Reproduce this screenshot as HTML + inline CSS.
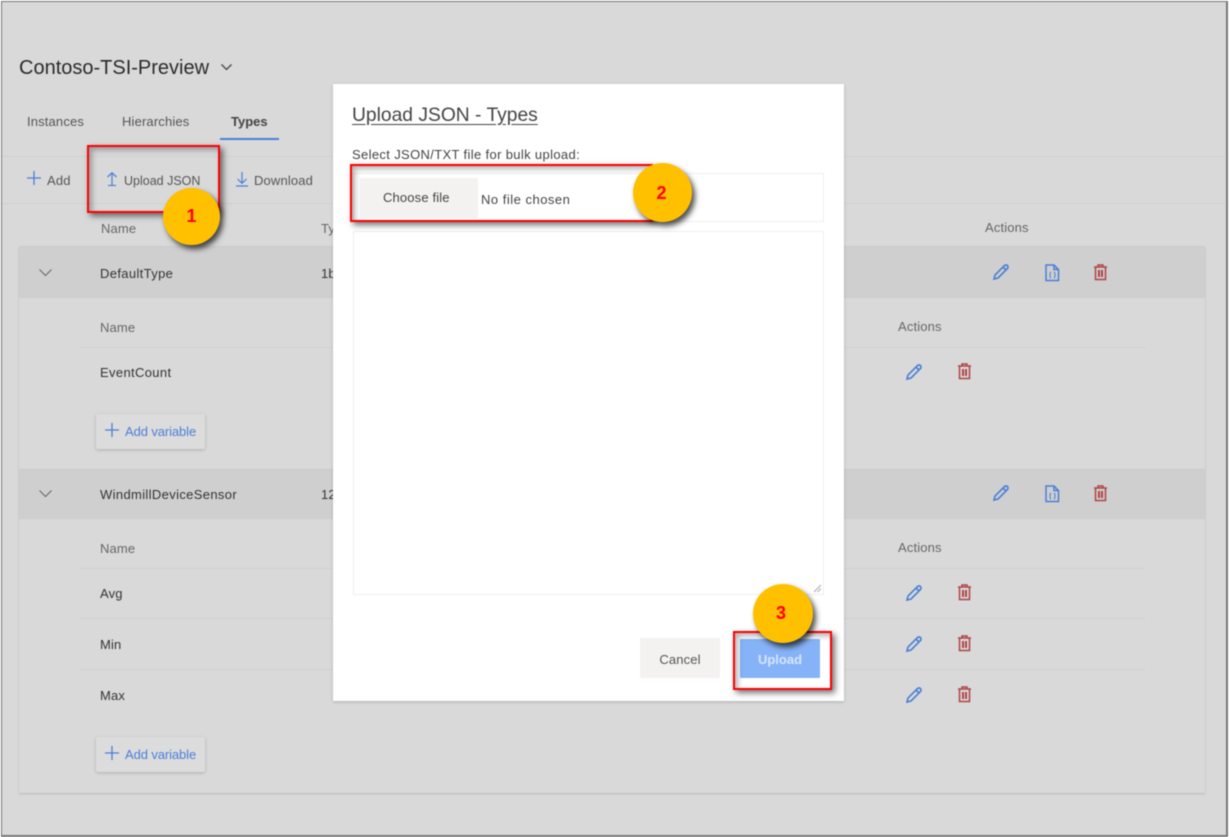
<!DOCTYPE html>
<html lang="en">
<head>
<meta charset="utf-8">
<title>Upload JSON - Types</title>
<style>
html,body{margin:0;padding:0;width:1229px;height:837px;overflow:hidden;background:#fff}
body{position:relative;font-family:"Liberation Sans",sans-serif}
#f{position:absolute;left:0;top:0;width:1229px;height:837px;filter:blur(.4px)}
#f div,#f svg,#f span{position:absolute}
.t{white-space:nowrap;font-size:13px;line-height:18px;color:#555;letter-spacing:.15px;margin-top:1px}
.b{color:#333}
.page{left:1px;top:1px;width:1224px;height:833px;background:#d9d9d9;border:1px solid #777;border-right-width:2px;border-bottom-width:2px}
.line{height:1px;background:#d0d0d0}
.row{left:19px;width:1186px;background:#cfcfcf;box-shadow:0 1px 2px rgba(0,0,0,.14),0 -1px 1px rgba(0,0,0,.06)}
.panel{left:19px;width:1186px;background:#d9d9d9;box-shadow:0 1px 2px rgba(0,0,0,.16)}
.addv{left:96px;width:109px;height:35px;background:#dcdcdc;box-shadow:0 1px 3px rgba(0,0,0,.2);border-radius:2px}
.blue{color:#4a7fd6;letter-spacing:-.1px}
.modal{left:333px;top:84px;width:511px;height:617px;background:#fff;box-shadow:0 1px 3px rgba(0,0,0,.2)}
.red{border:2px solid #f00;box-sizing:border-box;box-shadow:3px 3px 6px rgba(0,0,0,.55),inset 3px 3px 6px rgba(0,0,0,.3)}
.c{border-radius:50%;background:#ffc000;box-shadow:3px 4px 6px rgba(0,0,0,.7);color:#f00;font-weight:bold;font-size:18px;text-align:center}
</style>
</head>
<body>
<div id="f">
<div class="page"></div>

<div class="t" style="left:19px;top:54px;font-size:20px;line-height:26px;color:#2b2b2b;letter-spacing:0">Contoso-TSI-Preview</div>
<svg style="left:220px;top:62px" width="13" height="10" viewBox="0 0 13 10"><path d="M1.5 2.500L6.500 7.500L11.500 2.500" fill="none" stroke="#444" stroke-width="1.300"/></svg>

<div class="t" style="left:27px;top:112px">Instances</div>
<div class="t" style="left:122px;top:112px">Hierarchies</div>
<div class="t b" style="left:231px;top:112px;font-weight:bold;color:#444;letter-spacing:0">Types</div>
<div style="left:220px;top:138px;width:59px;height:2px;background:#4a7fd6"></div>

<div class="line" style="left:2px;top:156px;width:1223px"></div>
<div class="line" style="left:2px;top:203px;width:1223px"></div>

<svg style="left:27px;top:171px" width="14" height="14" viewBox="0 0 14 14"><path d="M7 0V14M0 7H14" stroke="#4a7fd6" stroke-width="1.300"/></svg>
<div class="t" style="left:47px;top:171px">Add</div>
<svg style="left:106px;top:172px" width="12" height="14" viewBox="0 0 12 14"><path d="M6 1V13M1.500 5L6 .8L10.500 5M2 13.500H10" fill="none" stroke="#4a7fd6" stroke-width="1.200"/></svg>
<div class="t" style="left:124px;top:171px;font-size:12.5px;letter-spacing:0">Upload JSON</div>
<svg style="left:236px;top:171px" width="12" height="16" viewBox="0 0 12 16"><path d="M6 1V12M1.500 8L6 12.300L10.500 8M0 15H12" fill="none" stroke="#4a7fd6" stroke-width="1.200"/></svg>
<div class="t" style="left:254px;top:171px">Download</div>

<div class="t" style="left:101px;top:219px;color:#666">Name</div>
<div class="t" style="left:321px;top:219px;color:#666">Type</div>
<div class="t" style="left:985px;top:218px;color:#666">Actions</div>

<!-- group 1 -->
<div class="row" style="top:247px;height:51px"></div>
<div class="panel" style="top:298px;height:172px"></div>
<svg style="left:39px;top:268px" width="13" height="9" viewBox="0 0 13 9"><path d="M.5 1.500L6.500 7.500L12.500 1.500" fill="none" stroke="#666" stroke-width="1"/></svg>
<div class="t b" style="left:100px;top:264px;letter-spacing:.35px">DefaultType</div>
<div class="t b" style="left:321px;top:264px">1b</div>
<svg style="left:992px;top:263px" width="18" height="18" viewBox="0 0 18 18"><path d="M2 16L3 12L12.500 2.500Q14 1.500 15.500 2.500Q16.500 4 15.500 5.500L6 15ZM11 4L14 7" fill="none" stroke="#4a7fd6" stroke-width="1.600"/></svg>
<svg style="left:1044px;top:264px" width="16" height="18" viewBox="0 0 16 18"><path d="M2 1H10L14.500 5.500V16.500H2ZM10 1V5.500H14.500" fill="none" stroke="#4a7fd6" stroke-width="1.500"/><path d="M7 8C5.800 8 6.500 11 5.500 11C6.500 11 5.800 14 7 14M10 8C11.200 8 10.500 11 11.500 11C10.500 11 11.200 14 10 14" fill="none" stroke="#4a7fd6" stroke-width="1.100"/></svg>
<svg style="left:1093px;top:264px" width="15" height="17" viewBox="0 0 15 17"><path d="M1 3H14M5 3V1H10V3M2.500 3V15.500H12.500V3" fill="none" stroke="#b04545" stroke-width="1.500"/><path d="M6 6V13M9 6V13" stroke="#b04545" stroke-width="2"/></svg>

<div class="t" style="left:100px;top:318px;color:#666">Name</div>
<div class="t" style="left:898px;top:317px;color:#666">Actions</div>
<div class="line" style="left:80px;top:347px;width:1065px"></div>
<div class="t b" style="left:100px;top:363px;letter-spacing:.35px">EventCount</div>
<svg style="left:905px;top:363px" width="18" height="18" viewBox="0 0 18 18"><path d="M2 16L3 12L12.500 2.500Q14 1.500 15.500 2.500Q16.500 4 15.500 5.500L6 15ZM11 4L14 7" fill="none" stroke="#4a7fd6" stroke-width="1.600"/></svg>
<svg style="left:957px;top:363px" width="15" height="17" viewBox="0 0 15 17"><path d="M1 3H14M5 3V1H10V3M2.500 3V15.500H12.500V3" fill="none" stroke="#b04545" stroke-width="1.500"/><path d="M6 6V13M9 6V13" stroke="#b04545" stroke-width="2"/></svg>
<div class="addv" style="top:414px"></div>
<svg style="left:105px;top:423px" width="14" height="14" viewBox="0 0 14 14"><path d="M7 0V14M0 7H14" stroke="#4a7fd6" stroke-width="1.300"/></svg>
<div class="t blue" style="left:125px;top:422px">Add variable</div>

<!-- group 2 -->
<div class="row" style="top:470px;height:49px"></div>
<div class="panel" style="top:519px;height:274px"></div>
<svg style="left:39px;top:489px" width="13" height="9" viewBox="0 0 13 9"><path d="M.5 1.500L6.500 7.500L12.500 1.500" fill="none" stroke="#666" stroke-width="1"/></svg>
<div class="t b" style="left:100px;top:485px;letter-spacing:.35px">WindmillDeviceSensor</div>
<div class="t b" style="left:321px;top:485px">12</div>
<svg style="left:992px;top:484px" width="18" height="18" viewBox="0 0 18 18"><path d="M2 16L3 12L12.500 2.500Q14 1.500 15.500 2.500Q16.500 4 15.500 5.500L6 15ZM11 4L14 7" fill="none" stroke="#4a7fd6" stroke-width="1.600"/></svg>
<svg style="left:1044px;top:485px" width="16" height="18" viewBox="0 0 16 18"><path d="M2 1H10L14.500 5.500V16.500H2ZM10 1V5.500H14.500" fill="none" stroke="#4a7fd6" stroke-width="1.500"/><path d="M7 8C5.800 8 6.500 11 5.500 11C6.500 11 5.800 14 7 14M10 8C11.200 8 10.500 11 11.500 11C10.500 11 11.200 14 10 14" fill="none" stroke="#4a7fd6" stroke-width="1.100"/></svg>
<svg style="left:1093px;top:485px" width="15" height="17" viewBox="0 0 15 17"><path d="M1 3H14M5 3V1H10V3M2.500 3V15.500H12.500V3" fill="none" stroke="#b04545" stroke-width="1.500"/><path d="M6 6V13M9 6V13" stroke="#b04545" stroke-width="2"/></svg>

<div class="t" style="left:100px;top:539px;color:#666">Name</div>
<div class="t" style="left:898px;top:538px;color:#666">Actions</div>
<div class="line" style="left:80px;top:568px;width:1065px"></div>
<div class="t b" style="left:100px;top:584px">Avg</div>
<svg style="left:905px;top:584px" width="18" height="18" viewBox="0 0 18 18"><path d="M2 16L3 12L12.500 2.500Q14 1.500 15.500 2.500Q16.500 4 15.500 5.500L6 15ZM11 4L14 7" fill="none" stroke="#4a7fd6" stroke-width="1.600"/></svg>
<svg style="left:957px;top:584px" width="15" height="17" viewBox="0 0 15 17"><path d="M1 3H14M5 3V1H10V3M2.500 3V15.500H12.500V3" fill="none" stroke="#b04545" stroke-width="1.500"/><path d="M6 6V13M9 6V13" stroke="#b04545" stroke-width="2"/></svg>
<div class="line" style="left:80px;top:618px;width:1065px"></div>
<div class="t b" style="left:100px;top:635px">Min</div>
<svg style="left:905px;top:635px" width="18" height="18" viewBox="0 0 18 18"><path d="M2 16L3 12L12.500 2.500Q14 1.500 15.500 2.500Q16.500 4 15.500 5.500L6 15ZM11 4L14 7" fill="none" stroke="#4a7fd6" stroke-width="1.600"/></svg>
<svg style="left:957px;top:635px" width="15" height="17" viewBox="0 0 15 17"><path d="M1 3H14M5 3V1H10V3M2.500 3V15.500H12.500V3" fill="none" stroke="#b04545" stroke-width="1.500"/><path d="M6 6V13M9 6V13" stroke="#b04545" stroke-width="2"/></svg>
<div class="line" style="left:80px;top:669px;width:1065px"></div>
<div class="t b" style="left:100px;top:686px">Max</div>
<svg style="left:905px;top:686px" width="18" height="18" viewBox="0 0 18 18"><path d="M2 16L3 12L12.500 2.500Q14 1.500 15.500 2.500Q16.500 4 15.500 5.500L6 15ZM11 4L14 7" fill="none" stroke="#4a7fd6" stroke-width="1.600"/></svg>
<svg style="left:957px;top:686px" width="15" height="17" viewBox="0 0 15 17"><path d="M1 3H14M5 3V1H10V3M2.500 3V15.500H12.500V3" fill="none" stroke="#b04545" stroke-width="1.500"/><path d="M6 6V13M9 6V13" stroke="#b04545" stroke-width="2"/></svg>
<div class="addv" style="top:737px"></div>
<svg style="left:105px;top:746px" width="14" height="14" viewBox="0 0 14 14"><path d="M7 0V14M0 7H14" stroke="#4a7fd6" stroke-width="1.300"/></svg>
<div class="t blue" style="left:125px;top:745px">Add variable</div>

<!-- modal -->
<div class="modal"></div>
<div class="t" style="left:352px;top:102px;font-size:19.25px;line-height:26px;color:#444;text-decoration:underline;text-underline-offset:3px;letter-spacing:0">Upload JSON - Types</div>
<div class="t" style="left:352px;top:145px;color:#444;letter-spacing:.35px">Select JSON/TXT file for bulk upload:</div>
<div style="left:353px;top:173px;width:469px;height:47px;border:1px solid #eee"></div>
<div style="left:360px;top:178px;width:118px;height:40px;background:#f3f2f1"></div>
<div class="t" style="left:383px;top:188px;color:#444">Choose file</div>
<div class="t" style="left:481px;top:190px;color:#444;letter-spacing:.5px">No file chosen</div>
<div style="left:353px;top:231px;width:469px;height:362px;border:1px solid #eee"></div>
<svg style="left:813px;top:584px" width="9" height="9" viewBox="0 0 9 9"><path d="M1 8L8 1M4.500 8L8 4.500" stroke="#aaa" stroke-width="1"/></svg>
<div style="left:640px;top:638px;width:80px;height:40px;background:#f3f2f1"></div>
<div class="t" style="left:640px;top:650px;width:80px;text-align:center;color:#555">Cancel</div>
<div style="left:740px;top:639px;width:80px;height:39px;background:#86b3f7;border-radius:1px"></div>
<div class="t" style="left:740px;top:650px;width:80px;text-align:center;color:#d6e5fb;font-weight:bold;letter-spacing:0">Upload</div>

<!-- annotations -->
<div class="red" style="left:87px;top:145px;width:133px;height:68px"></div>
<div class="red" style="left:350px;top:164px;width:303px;height:58px"></div>
<div class="red" style="left:733px;top:631px;width:99px;height:59px"></div>
<div class="c" style="left:163px;top:188px;width:57px;height:57px;line-height:56px">1</div>
<div class="c" style="left:633px;top:163px;width:59px;height:59px;line-height:60px;text-indent:-2px">2</div>
<div class="c" style="left:753px;top:584px;width:60px;height:59px;line-height:58px;text-indent:-4px">3</div>
</div>
</body>
</html>
